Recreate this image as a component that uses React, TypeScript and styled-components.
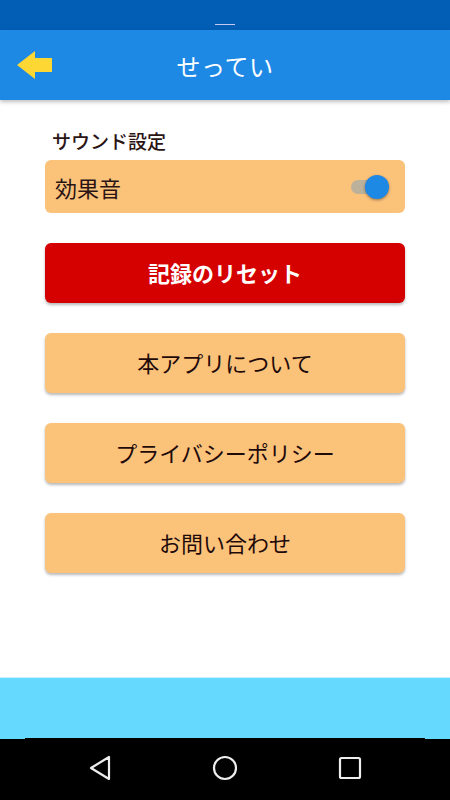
import React from "react";
import styled, { createGlobalStyle } from "styled-components";

const Global = createGlobalStyle`
  html, body { margin: 0; padding: 0; background: #fff; }
  *, *::before, *::after { box-sizing: border-box; }
  body { font-family: "Noto Sans CJK JP", "Noto Sans", sans-serif; }
`;

const Screen = styled.div`
  width: 450px;
  height: 800px;
  display: flex;
  flex-direction: column;
  overflow: hidden;
`;

const StatusBar = styled.div`
  height: 30px;
  background: #025eb4;
  display: flex;
  justify-content: center;
  align-items: flex-end;
  flex-shrink: 0;
`;

const StatusMark = styled.div`
  width: 20px;
  height: 1px;
  margin-bottom: 5px;
  background: #c9c8f0;
`;

const AppBar = styled.header`
  position: relative;
  height: 70px;
  background: #1e88e5;
  display: flex;
  align-items: center;
  justify-content: center;
  box-shadow: 0 2px 4px rgba(0, 0, 0, 0.25);
  flex-shrink: 0;
  z-index: 1;
`;

const BackButton = styled.button`
  position: absolute;
  left: 16px;
  top: 19px;
  width: 40px;
  height: 32px;
  padding: 0;
  border: none;
  background: transparent;
  display: flex;
  align-items: center;
  justify-content: center;
`;

const Title = styled.h1`
  margin: 0;
  color: #fff;
  font-size: 24px;
  font-weight: 400;
  letter-spacing: 0.5px;
`;

const Content = styled.main`
  flex: 1;
  display: flex;
  flex-direction: column;
  padding: 28px 45px 0;
  background: #fff;
`;

const SectionLabel = styled.div`
  padding-left: 7px;
  font-size: 19px;
  line-height: 26px;
  font-weight: 500;
  color: #2b1414;
  margin-bottom: 6px;
`;

const ToggleCard = styled.div`
  height: 53px;
  border-radius: 6px;
  background: #fbc27a;
  display: flex;
  align-items: center;
  justify-content: space-between;
  padding: 0 16px 0 10px;
  margin-bottom: 30px;
`;

const ToggleText = styled.span`
  font-size: 22px;
  color: #2b1414;
  font-weight: 400;
`;

const Switch = styled.div`
  position: relative;
  width: 38px;
  height: 24px;
  display: flex;
  align-items: center;
`;

const Track = styled.div`
  width: 34px;
  height: 14px;
  border-radius: 7px;
  background: #bcb19b;
`;

const Thumb = styled.div`
  position: absolute;
  right: 0;
  top: 0;
  width: 24px;
  height: 24px;
  border-radius: 50%;
  background: #1e88e5;
  box-shadow: 0 1px 3px rgba(0, 0, 0, 0.4);
`;

const ActionButton = styled.button<{ $danger?: boolean }>`
  height: 60px;
  border: none;
  border-radius: 6px;
  margin-bottom: 30px;
  background: ${(p) => (p.$danger ? "#d50000" : "#fbc27a")};
  color: ${(p) => (p.$danger ? "#ffffff" : "#1f0a0a")};
  font-family: "Noto Sans CJK JP", "Noto Sans", sans-serif;
  font-size: 22px;
  font-weight: ${(p) => (p.$danger ? 700 : 400)};
  box-shadow: 0 2px 3px rgba(0, 0, 0, 0.28);
  display: flex;
  align-items: center;
  justify-content: center;
  padding: 0 0 2px;
`;

const Banner = styled.div`
  height: 62px;
  background: #66d9ff;
  border-top: 1px solid #c8f0ff;
  display: flex;
  flex-direction: column;
  justify-content: flex-end;
  flex-shrink: 0;
`;

const BannerEdge = styled.div`
  height: 1px;
  margin: 0 25px;
  background: #000;
`;

const NavBar = styled.nav`
  height: 61px;
  background: #000;
  display: flex;
  align-items: center;
  justify-content: center;
  gap: 97px;
  padding-bottom: 4px;
  flex-shrink: 0;
`;

const NavIcon = styled.svg`
  width: 28px;
  height: 28px;
`;

export default function App() {
  return (
    <>
      <Global />
      <Screen>
        <StatusBar>
          <StatusMark />
        </StatusBar>
        <AppBar>
          <BackButton aria-label="back">
            <svg width="40" height="32" viewBox="0 0 40 32">
              <polygon
                points="1,16 19,2 19,9 36,9 36,23 19,23 19,30"
                fill="#fdd835"
              />
            </svg>
          </BackButton>
          <Title>せってい</Title>
        </AppBar>
        <Content>
          <SectionLabel>サウンド設定</SectionLabel>
          <ToggleCard>
            <ToggleText>効果音</ToggleText>
            <Switch>
              <Track />
              <Thumb />
            </Switch>
          </ToggleCard>
          <ActionButton $danger>記録のリセット</ActionButton>
          <ActionButton>本アプリについて</ActionButton>
          <ActionButton>プライバシーポリシー</ActionButton>
          <ActionButton>お問い合わせ</ActionButton>
        </Content>
        <Banner>
          <BannerEdge />
        </Banner>
        <NavBar>
          <NavIcon viewBox="0 0 28 28">
            <polygon
              points="23,3 23,25 5,14"
              fill="none"
              stroke="#eee"
              strokeWidth="2.2"
              strokeLinejoin="round"
            />
          </NavIcon>
          <NavIcon viewBox="0 0 28 28">
            <circle cx="14" cy="14" r="11" fill="none" stroke="#eee" strokeWidth="2.2" />
          </NavIcon>
          <NavIcon viewBox="0 0 28 28">
            <rect x="4" y="4" width="20" height="20" rx="1.5" fill="none" stroke="#eee" strokeWidth="2.2" />
          </NavIcon>
        </NavBar>
      </Screen>
    </>
  );
}
